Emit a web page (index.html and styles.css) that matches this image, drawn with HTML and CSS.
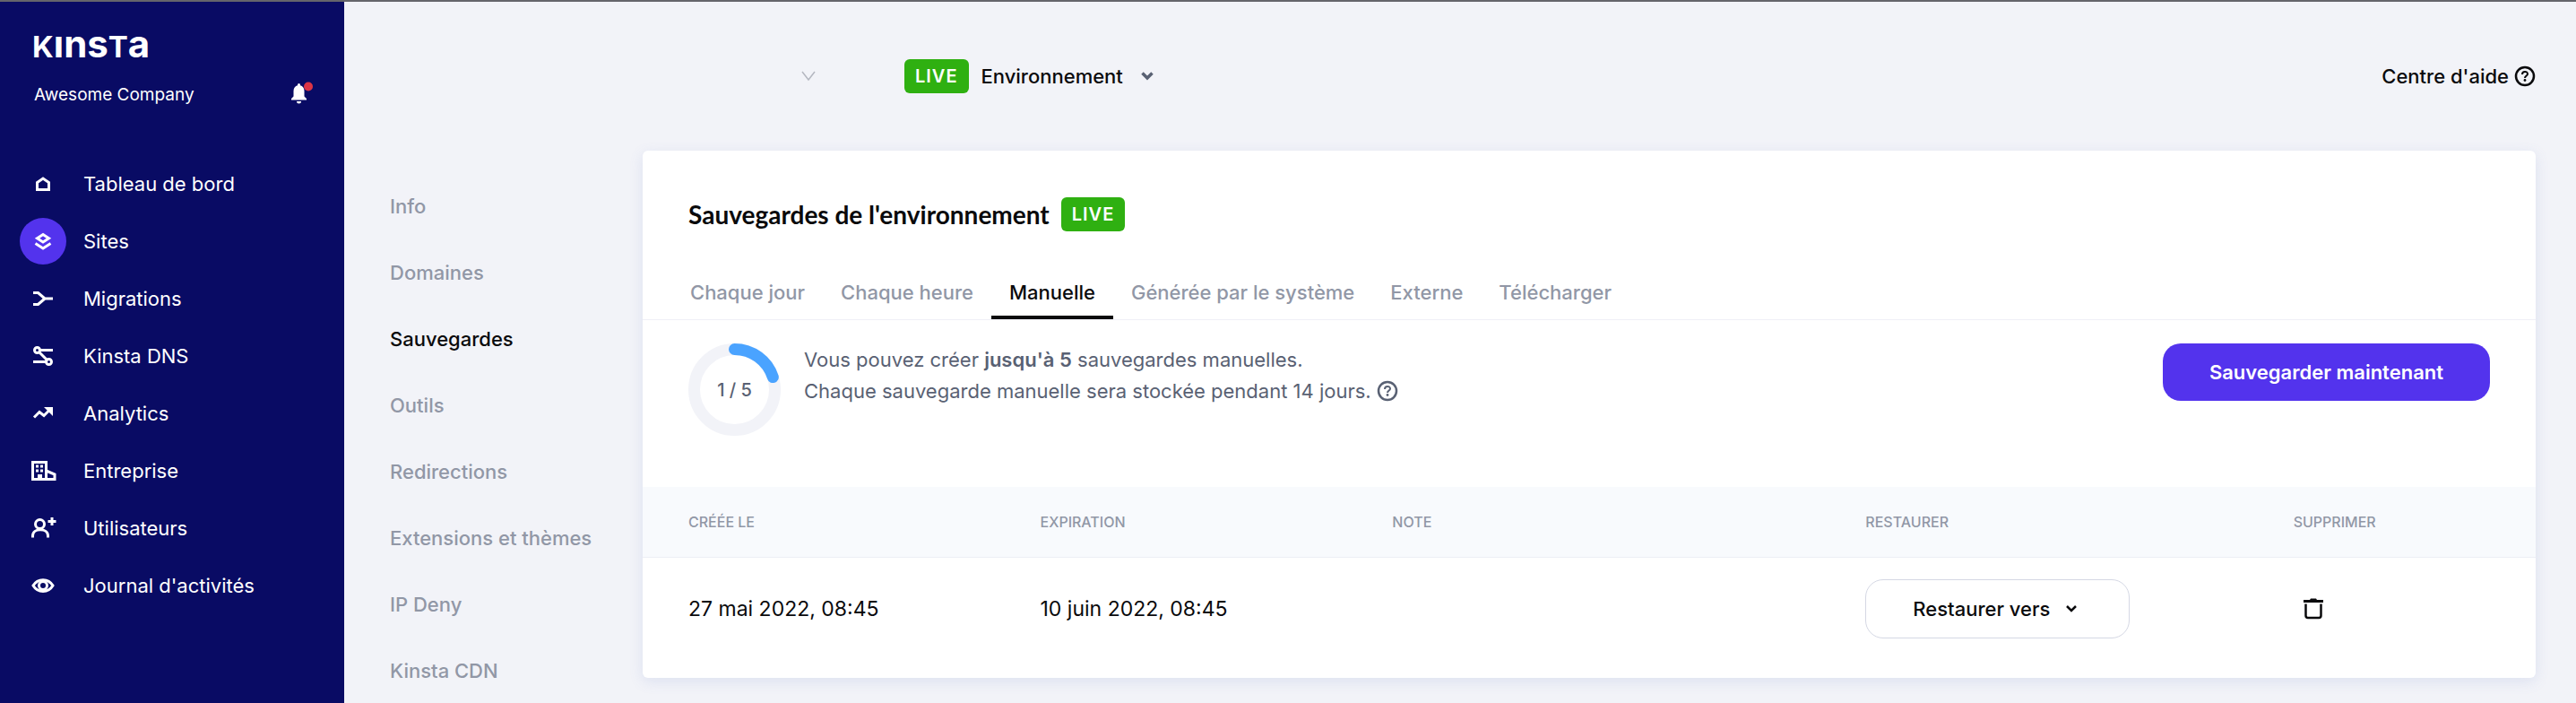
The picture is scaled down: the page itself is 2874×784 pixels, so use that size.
FILE: index.html
```html
<!DOCTYPE html>
<html lang="fr">
<head>
  <meta charset="UTF-8">
  <meta name="viewport" content="width=device-width, initial-scale=1.0">
  <title>Sauvegardes</title>
  <link rel="stylesheet" href="styles.css">
</head>
<body>

  <!-- SIDEBAR -->
  <aside class="sidebar">
    <a class="logo" href="#" aria-label="Kinsta"><span class="logo-cap">K</span>ıns<span class="logo-cap">T</span>a</a>
    <div class="company">
      <span>Awesome Company</span>
      <button class="icon-btn" aria-label="Notifications">
        <svg width="28" height="28" viewBox="0 0 28 28">
          <path d="M4 20.500v-1.500l2.500-2.500v-6c0-3.300 1.700-5.500 4.500-6.200V3.500a1.500 1.500 0 0 1 3 0v.8c2.800.7 4.500 2.900 4.500 6.200v6l2.500 2.500v1.500z" fill="#fff"/>
          <path d="M10 22h5a2.500 2.500 0 0 1-5 0z" fill="#fff"/>
          <circle cx="23" cy="5.500" r="5" fill="#dc3545"/>
        </svg>
      </button>
    </div>

    <nav>
      <ul class="nav">
        <li><a href="#">
          <span class="nav-icon"><svg width="32" height="32" viewBox="0 0 32 32"><path d="M9.500 22.500v-8L16 10l6.500 4.500v8z"/></svg></span>
          Tableau de bord</a></li>
        <li><a class="active" href="#">
          <span class="nav-icon"><svg width="32" height="32" viewBox="0 0 32 32"><path d="M16 8.500l6.500 4.200L16 17l-6.500-4.300zM7.500 18.500L16 24l8.500-5.500"/></svg></span>
          Sites</a></li>
        <li><a href="#">
          <span class="nav-icon"><svg width="32" height="32" viewBox="0 0 32 32"><path d="M5 9.500h5.500L18 16h9M5 22.500h5.500L18 16"/></svg></span>
          Migrations</a></li>
        <li><a href="#">
          <span class="nav-icon"><svg width="32" height="32" viewBox="0 0 32 32"><circle cx="9.500" cy="9.500" r="3"/><circle cx="22.500" cy="22.500" r="3"/><path d="M13 9.500h14M5 22.500h14M11.500 11.500l9 9"/></svg></span>
          Kinsta DNS</a></li>
        <li><a href="#">
          <span class="nav-icon"><svg width="32" height="32" viewBox="0 0 32 32"><path d="M6 20.500l6-6 5 4 7-7"/><path d="M17 9h10v10l-3-3-4-4z" fill="#fff" stroke="none"/></svg></span>
          Analytics</a></li>
        <li><a href="#">
          <span class="nav-icon"><svg width="32" height="32" viewBox="0 0 32 32"><path d="M4.500 6.500h15v19h-15zM19.500 16l9.500 4v5.500h-10" stroke-width="3"/><path d="M8 9.500h3v3H8zM13 9.500h3v3h-3zM8 14.500h3v3H8zM13 14.500h3v3h-3zM10 20h5v6h-5z" fill="#fff" stroke="none"/></svg></span>
          Entreprise</a></li>
        <li><a href="#">
          <span class="nav-icon"><svg width="32" height="32" viewBox="0 0 32 32"><circle cx="12.500" cy="11.500" r="5"/><path d="M4.500 26.500v-2c0-9 17-9 17 0v2M26 4v9M21.500 8.500h9"/></svg></span>
          Utilisateurs</a></li>
        <li><a href="#">
          <span class="nav-icon"><svg width="32" height="32" viewBox="0 0 32 32"><path d="M5 16c5-8.500 17-8.500 22 0-5 8.500-17 8.500-22 0z"/><circle cx="16" cy="16" r="4.500"/></svg></span>
          Journal d'activités</a></li>
      </ul>
    </nav>
  </aside>

  <main class="main">
    <header class="topbar">
      <div class="site-select">
        <select aria-label="Site"><option></option></select>
        <svg width="18" height="14" viewBox="0 0 18 14"><path d="M2 2l7 9 7-9" fill="none" stroke="#b4b7c0" stroke-width="1.500"/></svg>
      </div>
      <div class="env-select">
        <span class="badge">LIVE</span>
        <select aria-label="Environnement"><option>Environnement</option></select>
        <svg width="16" height="12" viewBox="0 0 16 12"><path d="M2.500 2.500l5.500 5.500 5.500-5.500" fill="none" stroke="#596173" stroke-width="3.500"/></svg>
      </div>
      <a class="help" href="#">Centre d'aide
        <svg width="24" height="24" viewBox="0 0 24 24"><circle cx="12" cy="12" r="10" fill="none" stroke="currentColor" stroke-width="2.500"/><path d="M9 10c0-4 6-4 6-.5 0 2-3 2-3 4.500" fill="none" stroke="currentColor" stroke-width="2"/><circle cx="12" cy="16.500" r="1.400" fill="currentColor"/></svg>
      </a>
    </header>

    <div class="layout">
      <nav>
        <ul class="subnav">
          <li><a href="#">Info</a></li>
          <li><a href="#">Domaines</a></li>
          <li><a class="current" href="#">Sauvegardes</a></li>
          <li><a href="#">Outils</a></li>
          <li><a href="#">Redirections</a></li>
          <li><a href="#">Extensions et thèmes</a></li>
          <li><a href="#">IP Deny</a></li>
          <li><a href="#">Kinsta CDN</a></li>
        </ul>
      </nav>

      <section class="card">
        <h1 class="card-title">Sauvegardes de l'environnement <span class="badge">LIVE</span></h1>

        <div class="tabs" role="tablist">
          <button role="tab">Chaque jour</button>
          <button role="tab">Chaque heure</button>
          <button role="tab" class="selected" aria-selected="true">Manuelle</button>
          <button role="tab">Générée par le système</button>
          <button role="tab">Externe</button>
          <button role="tab">Télécharger</button>
        </div>

        <div class="usage">
          <div class="ring">
            <svg width="103" height="103" viewBox="0 0 103 103">
              <circle cx="51.500" cy="51.500" r="45" fill="none" stroke="#f2f3f8" stroke-width="13"/>
              <path d="M51.500 6.500a45 45 0 0 1 42.800 31.100" fill="none" stroke="#4aa3ff" stroke-width="13" stroke-linecap="round"/>
            </svg>
            <span>1 / 5</span>
          </div>
          <p class="usage-text">Vous pouvez créer <b>jusqu'à 5</b> sauvegardes manuelles.<br>
            Chaque sauvegarde manuelle sera stockée pendant 14 jours.
            <svg width="24" height="24" viewBox="0 0 24 24"><circle cx="12" cy="12" r="10" fill="none" stroke="currentColor" stroke-width="2.500"/><path d="M9 10c0-4 6-4 6-.5 0 2-3 2-3 4.500" fill="none" stroke="currentColor" stroke-width="2"/><circle cx="12" cy="16.500" r="1.400" fill="currentColor"/></svg>
          </p>
          <button class="btn-primary">Sauvegarder maintenant</button>
        </div>

        <table class="backups">
          <thead>
            <tr>
              <th class="col-created">Créée le</th>
              <th class="col-expires">Expiration</th>
              <th class="col-note">Note</th>
              <th class="col-restore">Restaurer</th>
              <th>Supprimer</th>
            </tr>
          </thead>
          <tbody>
            <tr>
              <td>27 mai 2022, 08:45</td>
              <td>10 juin 2022, 08:45</td>
              <td></td>
              <td>
                <button class="btn-outline">Restaurer vers
                  <svg width="14" height="12" viewBox="0 0 14 12"><path d="M2 3l5 5 5-5" fill="none" stroke="currentColor" stroke-width="2.500"/></svg>
                </button>
              </td>
              <td>
                <button class="icon-btn trash" aria-label="Supprimer">
                  <svg width="24" height="24" viewBox="0 0 24 24"><path d="M1 2h7l1-1.500h6L16 2h7v3H1z" fill="currentColor"/><path d="M3.500 6.500v13c0 1.700.8 2.500 2.500 2.500h12c1.700 0 2.500-.8 2.500-2.500v-13" fill="none" stroke="currentColor" stroke-width="2.500"/></svg>
                </button>
              </td>
            </tr>
          </tbody>
        </table>
      </section>
    </div>
  </main>

</body>
</html>
```
FILE: styles.css
```css
* { margin: 0; padding: 0; box-sizing: border-box; }

body {
  display: flex;
  min-height: 100vh;
  border-top: 2px solid #65656b;
  background: #f2f3f8;
  color: #0a0a0c;
  font-family: Inter, "Liberation Sans", sans-serif;
  font-size: 22px;
  font-weight: 500;
}

a { color: inherit; text-decoration: none; }
ul { list-style: none; }
svg { flex: none; }

button, select {
  border: none;
  background: none;
  color: inherit;
  font: inherit;
  cursor: pointer;
}

select { appearance: none; }

/* sidebar */
.sidebar {
  flex: none;
  width: 384px;
  background: #090b64;
  color: #fff;
  font-weight: 400;
}

.logo {
  display: block;
  padding: 29px 36px 0;
  font-size: 42px;
  font-weight: 700;
  line-height: 36px;
}

.logo-cap { font-size: 33px; }

.company {
  display: flex;
  justify-content: space-between;
  align-items: center;
  height: 70px;
  padding: 0 35px 0 38px;
  font-size: 19px;
}

.icon-btn { display: flex; }

.nav { padding-top: 33px; }

.nav a {
  display: flex;
  align-items: center;
  gap: 19px;
  height: 64px;
  padding-left: 22px;
}

.nav-icon {
  display: grid;
  place-items: center;
  width: 52px;
  height: 52px;
  border-radius: 50%;
}

.nav-icon svg {
  fill: none;
  stroke: #fff;
  stroke-width: 3;
}

.nav .active .nav-icon { background: #5333ed; }

/* main */
.main {
  flex: 1;
  padding: 0 45px 28px 51px;
}

.topbar {
  display: flex;
  align-items: center;
  height: 166px;
}

.site-select {
  display: flex;
  align-items: center;
  width: 476px;
}

.site-select select { flex: 1; }

.env-select {
  display: flex;
  align-items: center;
  gap: 14px;
  margin-left: 98px;
}

.env-select svg { margin-left: 4px; }

.badge {
  padding: 0 12px;
  border-radius: 6px;
  background: #2fb011;
  color: #fff;
  font-family: Inter, sans-serif;
  font-size: 20px;
  font-weight: 600;
  letter-spacing: 1px;
  line-height: 38px;
}

.help {
  display: flex;
  align-items: center;
  gap: 6px;
  margin-left: auto;
}

.layout {
  display: grid;
  grid-template-columns: 282px 1fr;
  align-items: start;
}

.subnav {
  display: flex;
  flex-direction: column;
  gap: 44px;
  padding-top: 47px;
  color: #9197a6;
  line-height: 30px;
}

.subnav .current { color: #0a0a0c; }

/* card */
.card {
  border-radius: 6px;
  background: #fff;
  box-shadow: 0 4px 16px rgba(90, 120, 200, 0.14);
}

.card-title {
  display: flex;
  align-items: center;
  gap: 13px;
  padding: 52px 51px 0;
  font-family: Lato, sans-serif;
  font-size: 28px;
  font-weight: 700;
}

.tabs {
  display: flex;
  height: 99px;
  padding: 42px 33px 0;
  border-bottom: 1px solid #f0f0f7;
}

.tabs button {
  padding: 0 20px;
  border-bottom: 4px solid transparent;
  color: #9197a6;
}

.tabs .selected {
  border-color: #0a0a0c;
  color: #0a0a0c;
}

.usage {
  display: flex;
  align-items: flex-start;
  gap: 26px;
  padding: 26px 51px 57px;
  color: #596173;
}

.ring {
  display: grid;
  place-items: center;
}

.ring > * { grid-area: 1 / 1; }
.ring svg { display: block; }
.ring span { font-size: 20px; }

.usage-text {
  padding-top: 1px;
  font-weight: 400;
  line-height: 35px;
}

.usage-text b { font-weight: 600; }
.usage-text svg { vertical-align: -4px; }

.btn-primary {
  height: 64px;
  margin-left: auto;
  padding: 0 52px;
  border-radius: 20px;
  background: #5333ed;
  color: #fff;
  font-weight: 600;
}

.backups {
  width: 100%;
  border-collapse: collapse;
  table-layout: fixed;
}

.backups th {
  height: 78px;
  border-bottom: 1px solid #eceff5;
  background: #f8fafd;
  color: #9197a6;
  font-size: 16px;
  font-weight: 500;
  text-align: left;
  text-transform: uppercase;
}

.backups td {
  height: 135px;
  padding-bottom: 19px;
  font-size: 23px;
  font-weight: 400;
}

.backups th:first-child,
.backups td:first-child { padding-left: 51px; }

.col-created { width: 21%; }
.col-expires { width: 18.6%; }
.col-note { width: 25%; }
.col-restore { width: 22.6%; }

.btn-outline {
  display: flex;
  align-items: center;
  gap: 17px;
  height: 66px;
  padding: 0 57px 0 52px;
  border: 1px solid #d5d8e4;
  border-radius: 20px;
  font-size: 22px;
  font-weight: 500;
}

.trash { margin-left: 10px; }
```
